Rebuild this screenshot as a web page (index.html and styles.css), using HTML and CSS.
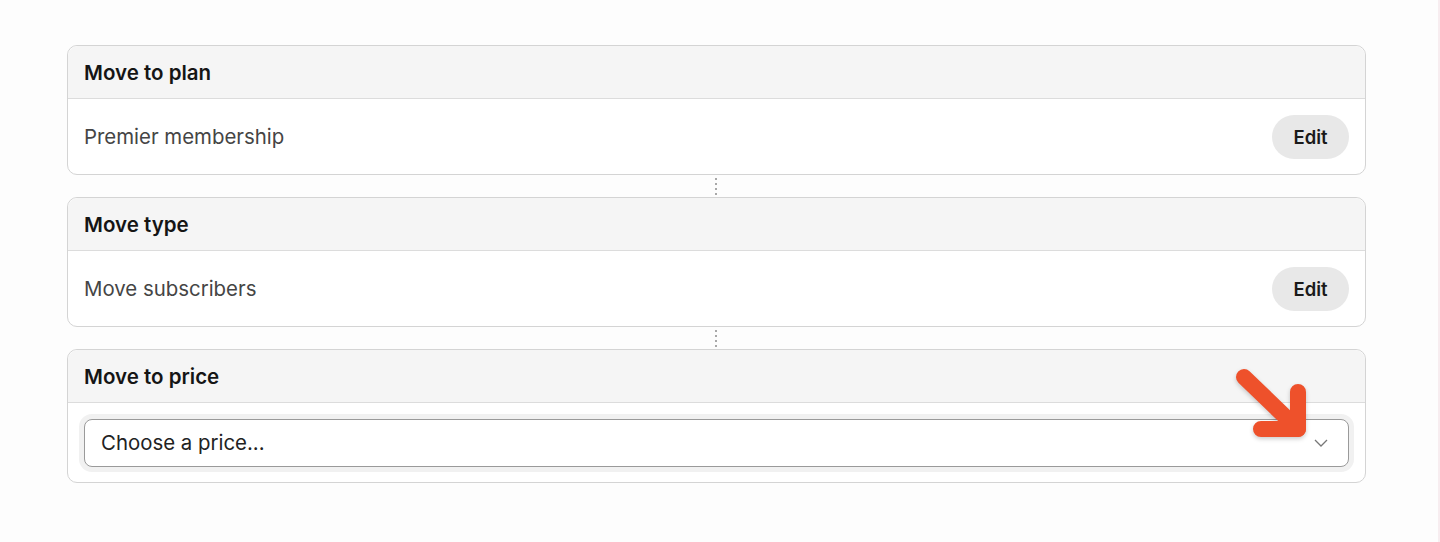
FILE: index.html
```html
<!DOCTYPE html>
<html lang="en">
  <head>
    <meta charset="UTF-8" />
    <meta name="viewport" content="width=device-width, initial-scale=1.0" />
    <title>Move subscribers</title>
    <link rel="stylesheet" href="styles.css">
  </head>
  <body>
    <div class="container">
      <div class="card">
        <div class="card-header">Move to plan</div>
        <div class="card-body">
          <span class="value">Premier membership</span>
          <button type="button" class="edit-btn">Edit</button>
        </div>
      </div>

      <div class="connector"></div>

      <div class="card">
        <div class="card-header">Move type</div>
        <div class="card-body">
          <span class="value">Move subscribers</span>
          <button type="button" class="edit-btn">Edit</button>
        </div>
      </div>

      <div class="connector"></div>

      <div class="card">
        <div class="card-header">Move to price</div>
        <div class="card-body select-body">
          <div class="select">
            <span>Choose a price...</span>
            <svg class="chevron" width="14" height="8" viewBox="0 0 14 8">
              <path d="M1 1l6 6 6-6" fill="none" stroke="#777" stroke-width="1.3" />
            </svg>
          </div>
          <!-- arrow annotation -->
          <svg class="pointer" width="90" height="90" viewBox="0 0 90 90">
            <g fill="none" stroke="#ee512b" stroke-width="16" stroke-linecap="round" stroke-linejoin="round">
              <path d="M12 10L66 62" />
              <path d="M66 25V62H29" />
            </g>
          </svg>
        </div>
      </div>
    </div>
  </body>
</html>
```

FILE: styles.css
```css
* {
  box-sizing: border-box;
}
body {
  margin: 0;
  min-height: 100vh;
  background-color: #fdfdfd;
  font-family: Inter, "Noto Sans", sans-serif;
  color: #1a1a1a;
  box-shadow: inset -2px 0 0 #f7edf0;
}
.container {
  width: 1299px;
  margin-left: 67px;
  padding-top: 45px;
}
.card {
  background-color: white;
  border: 1px solid #d4d4d4;
  border-radius: 10px;
}
.card-header {
  background-color: #f5f5f5;
  border-bottom: 1px solid #dcdcdc;
  border-radius: 10px 10px 0 0;
  height: 53px;
  padding: 0 16px;
  display: flex;
  align-items: center;
  font-size: 20.5px;
  font-weight: 600;
  color: #151515;
}
.card-body {
  height: 75px;
  padding: 0 16px;
  display: flex;
  align-items: center;
  justify-content: space-between;
}
.value {
  font-size: 20.4px;
  color: #454545;
}
.edit-btn {
  width: 77px;
  height: 44px;
  border: none;
  border-radius: 22px;
  background-color: #e8e8e8;
  font-family: inherit;
  font-size: 18.5px;
  font-weight: 600;
  color: #1a1a1a;
  cursor: pointer;
}
.connector {
  height: 22px;
  display: flex;
  justify-content: center;
  align-items: center;
}
.connector::before {
  content: "";
  width: 2px;
  height: 17px;
  margin-left: -1px;
  background-image: linear-gradient(#a8a8a8 50%, transparent 50%);
  background-size: 2px 5px;
}
.select-body {
  height: 79px;
  position: relative;
}
.select {
  width: 100%;
  height: 48px;
  border: 1px solid #9a9a9a;
  border-radius: 8px;
  box-shadow: 0 0 0 5px #f1f1f1;
  padding: 0 16px;
  display: flex;
  align-items: center;
  justify-content: space-between;
  font-size: 20.4px;
  color: #222;
  background-color: white;
}
.chevron {
  margin-right: 4px;
}
.pointer {
  position: absolute;
  left: 1164px;
  top: -36px;
  filter: drop-shadow(0 2px 2px rgba(0, 0, 0, 0.2));
}
```
